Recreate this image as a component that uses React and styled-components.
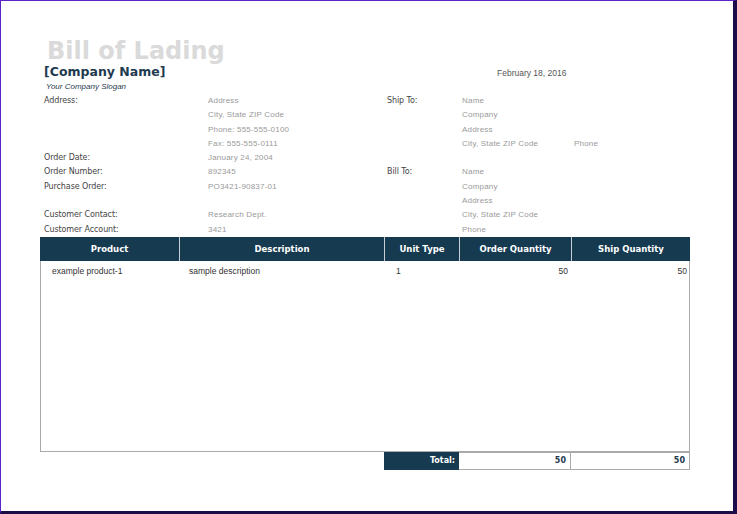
import React from "react";
import styled, { createGlobalStyle } from "styled-components";

const G = createGlobalStyle`
  html,body{margin:0;padding:0;background:#fff;}
  #root{width:737px;height:514px;}
`;
const Frame = styled.div`
  box-sizing:border-box;width:737px;height:514px;
  border-left:1px solid #5a24c8;border-top:1px solid #5a24c8;
  border-right:4px solid #1c0c4a;border-bottom:3px solid #1c0c4a;
  padding:36px 0 0 39px;font-family:"Liberation Sans",Arial,sans-serif;
`;
const Title = styled.div`
  font-family:"DejaVu Sans",sans-serif;font-weight:bold;font-size:24px;color:#dadada;
  margin-left:7px;line-height:28px;height:27px;
`;
const HeadRow = styled.div`display:flex;align-items:baseline;height:16px;`;
const Company = styled.div`
  font-family:"DejaVu Sans",sans-serif;font-weight:bold;font-size:12.5px;color:#1f3a4f;
  margin-left:4px;width:453px;
`;
const DateT = styled.div`font-size:8.5px;color:#555;`;
const Slogan = styled.div`
  font-style:italic;font-size:8px;color:#1f3a4f;margin-left:6px;height:14px;line-height:14px;
`;
const Info = styled.div`display:grid;grid-template-columns:164px 179px 75px 112px 80px;margin-left:4px;`;
const L = styled.div`font-family:"DejaVu Sans",sans-serif;font-size:8px;color:#444;height:14.3px;line-height:14.3px;letter-spacing:-0.1px;`;
const V = styled.div`font-size:8px;color:#9a9a9a;height:14.3px;line-height:14.3px;letter-spacing:0.2px;`;
const Table = styled.div`margin-top:0;width:650px;`;
const Grid = styled.div`display:grid;grid-template-columns:139px 205px 75px 112px 119px;`;
const Th = styled.div`
  background:#163a50;color:#fff;font-family:"DejaVu Sans",sans-serif;font-weight:bold;font-size:8.5px;
  height:24px;display:flex;align-items:center;justify-content:center;
  border-left:${p=>p.$first?"none":"1px solid #c8d0d6"};
`;
const Body = styled.div`height:190px;border:1px solid #aaa;border-top:none;`;
const Td = styled.div`font-size:8.5px;color:#333;padding:5px 4px 0 ${p=>p.$pl||4}px;text-align:${p=>p.$r?"right":"left"};`;
const TotalRow = styled.div`display:grid;grid-template-columns:344px 75px 112px 119px;height:18px;`;
const TCell = styled.div`
  font-family:"DejaVu Sans",sans-serif;font-weight:bold;font-size:8px;display:flex;align-items:center;justify-content:flex-end;
  padding-right:4px;
  ${p=>p.$dark?"background:#163a50;color:#fff;":p.$box?"border:1px solid #aaa;border-left:none;color:#1f3a4f;":""}
`;
const left=[["Address:","Address"],["","City, State ZIP Code"],["","Phone: 555-555-0100"],["","Fax: 555-555-0111"],["Order Date:","January 24, 2004"],["Order Number:","892345"],["Purchase Order:","PO3421-90837-01"],["",""],["Customer Contact:","Research Dept."],["Customer Account:","3421"]];
const right=[["Ship To:","Name",""],["","Company",""],["","Address",""],["","City, State ZIP Code","Phone"],["",""," "],["Bill To:","Name",""],["","Company",""],["","Address",""],["","City, State ZIP Code",""],["","Phone",""]];
export default function App(){
  return <><G/><Frame>
    <Title>Bill of Lading</Title>
    <HeadRow><Company>[Company Name]</Company><DateT>February 18, 2016</DateT></HeadRow>
    <Slogan>Your Company Slogan</Slogan>
    <Info>{left.map((r,i)=><React.Fragment key={i}><L>{r[0]}</L><V>{r[1]}</V><L>{right[i][0]}</L><V>{right[i][1]}</V><V>{right[i][2]}</V></React.Fragment>)}</Info>
    <Table>
      <Grid>{["Product","Description","Unit Type","Order Quantity","Ship Quantity"].map((h,i)=><Th key={h} $first={i===0}>{h}</Th>)}</Grid>
      <Body><Grid><Td $pl={11}>example product-1</Td><Td $pl={9}>sample description</Td><Td $pl={11}>1</Td><Td $r>50</Td><Td $r>50</Td></Grid></Body>
      <TotalRow><div/><TCell $dark>Total:</TCell><TCell $box>50</TCell><TCell $box>50</TCell></TotalRow>
    </Table>
  </Frame></>;
}
